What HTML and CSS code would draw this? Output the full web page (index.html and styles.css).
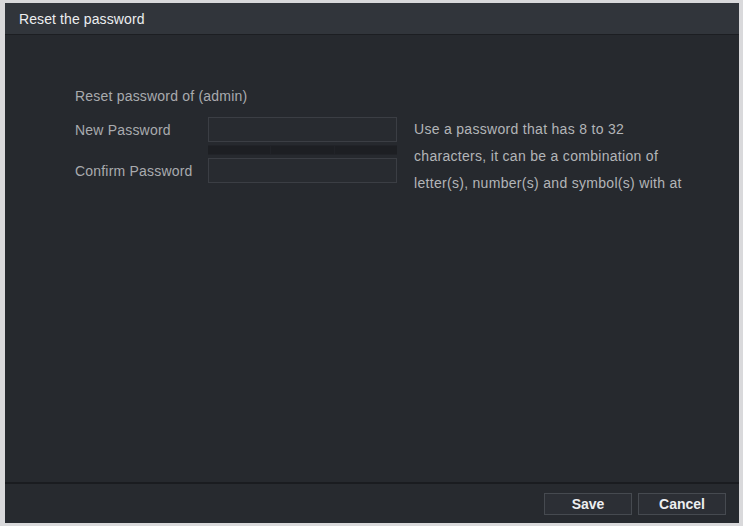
FILE: index.html
```html
<!DOCTYPE html>
<html lang="en">
<head>
<meta charset="utf-8">
<title>Reset the password</title>
<link rel="stylesheet" href="styles.css">
</head>
<body>
<div class="dialog">
  <div class="dialog-header">
    <span class="dialog-title">Reset the password</span>
  </div>
  <div class="dialog-body">
    <div class="intro">Reset password of (admin)</div>
    <div class="form">
      <div class="fields">
        <div class="field-row">
          <label class="label">New Password</label>
          <div class="input-wrap">
            <input class="input" type="password">
          </div>
        </div>
        <div class="strength">
          <span class="seg"></span><span class="seg"></span><span class="seg"></span>
        </div>
        <div class="field-row">
          <label class="label">Confirm Password</label>
          <div class="input-wrap">
            <input class="input" type="password">
          </div>
        </div>
      </div>
      <div class="help">
        <span class="help-line">Use a password that has 8 to 32</span>
        <span class="help-line">characters, it can be a combination of</span>
        <span class="help-line">letter(s), number(s) and symbol(s) with at</span>
      </div>
    </div>
  </div>
  <div class="dialog-footer">
    <button class="btn">Save</button>
    <button class="btn">Cancel</button>
  </div>
</div>
</body>
</html>
```
FILE: styles.css
```css
html, body {
  margin: 0;
  padding: 0;
}
body {
  background: #d9d9db;
  width: 743px;
  height: 526px;
  overflow: hidden;
  font-family: "Liberation Sans", Arial, sans-serif;
}
.dialog {
  margin: 3px 4px 0 5px;
  height: 520px;
  background: #26292e;
  display: flex;
  flex-direction: column;
}
.dialog-header {
  height: 31px;
  background: #31353b;
  border-bottom: 1px solid #1c1e22;
  display: flex;
  align-items: center;
  padding-left: 14px;
  flex: none;
}
.dialog-title {
  color: #eceef0;
  font-size: 14px;
  letter-spacing: 0.1px;
}
.dialog-body {
  flex: 1;
  padding: 51px 0 0 70px;
}
.intro {
  color: #a9abae;
  font-size: 14px;
  line-height: 20px;
  letter-spacing: 0.2px;
}
.form {
  display: flex;
  margin-top: 11px;
}
.fields {
  display: flex;
  flex-direction: column;
}
.field-row {
  display: flex;
  align-items: center;
  height: 25px;
}
.label {
  width: 133px;
  color: #a9abae;
  font-size: 14px;
  letter-spacing: 0.2px;
}
.input-wrap {
  width: 189px;
  height: 25px;
}
.input {
  box-sizing: border-box;
  width: 100%;
  height: 100%;
  margin: 0;
  background: #282b30;
  border: 1px solid #3b3e44;
  outline: none;
  color: #ddd;
}
.strength {
  margin: 3px 0 3px 133px;
  height: 10px;
  width: 189px;
  display: flex;
  gap: 1px;
  padding: 1px 0;
  box-sizing: border-box;
  background: #212328;
}
.seg {
  flex: 1;
  background: #1d1f23;
}
.help {
  margin-left: 17px;
  margin-top: -1px;
  display: flex;
  flex-direction: column;
  color: #b3b5b8;
  font-size: 14px;
  line-height: 27px;
  letter-spacing: 0.3px;
}
.dialog-footer {
  flex: none;
  height: 41px;
  border-top: 2px solid #1a1c20;
  box-sizing: border-box;
  display: flex;
  justify-content: flex-end;
  align-items: flex-start;
  padding: 9px 13px 0 0;
  gap: 6px;
  background: #272a2f;
}
.btn {
  width: 88px;
  height: 22px;
  background: #2c2f35;
  border: 1px solid #464a50;
  color: #eceef0;
  font-family: "Liberation Sans", Arial, sans-serif;
  font-size: 14px;
  font-weight: bold;
  padding: 0;
}
```
